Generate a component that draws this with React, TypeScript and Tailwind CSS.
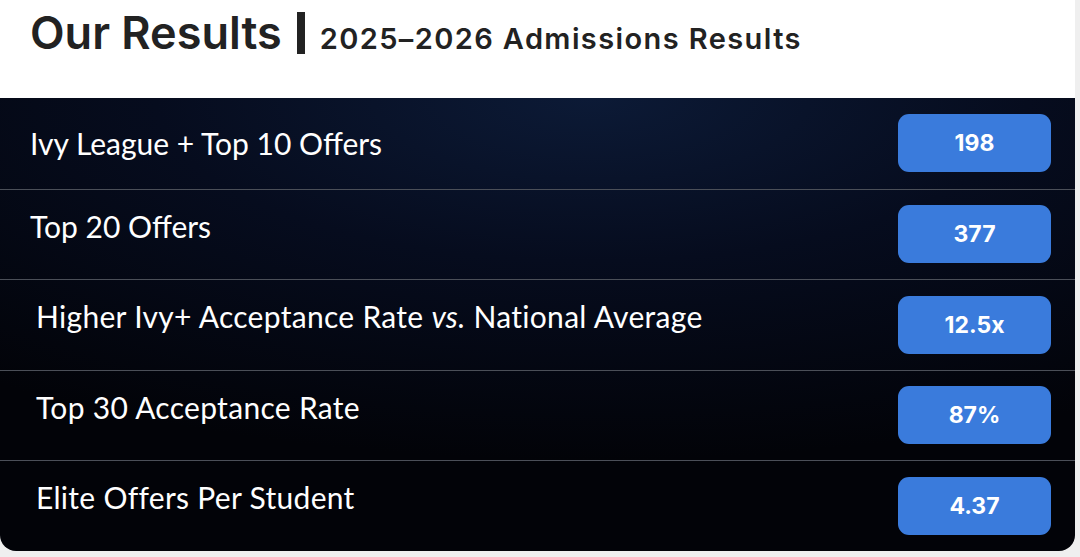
const rows = [
  { label: 'Ivy League + Top 10 Offers', value: '198', indent: false },
  { label: 'Top 20 Offers', value: '377', indent: false },
  { label: 'Higher Ivy+ Acceptance Rate', italic: 'vs.', rest: ' National Average', value: '12.5x', indent: true },
  { label: 'Top 30 Acceptance Rate', value: '87%', indent: true },
  { label: 'Elite Offers Per Student', value: '4.37', indent: true },
]

const heading = { fontFamily: 'Inter, "Noto Sans", sans-serif' }
const body = { fontFamily: 'Lato, "Noto Sans", sans-serif' }

export default function App() {
  return (
    <div className="min-h-[557px] w-[1080px] bg-[#efefef]">
      <div className="w-[1075px]">
        {/* Header */}
        <div className="flex h-[98px] items-baseline bg-white pl-[30px] pt-[5px] text-[#222222]" style={heading}>
          <span className="text-[45px] font-semibold leading-[56px]">Our Results</span>
          <span className="ml-[15px] mt-[7px] h-[42px] w-[8px] self-start bg-[#222222]" />
          <span className="ml-[15px] text-[29px] font-semibold tracking-[1.4px]">2025–2026 Admissions Results</span>
        </div>

        {/* Results panel */}
        <div className="overflow-hidden rounded-b-[16px] bg-[radial-gradient(ellipse_90%_80%_at_55%_0%,#0c1a36_0%,#060c1e_45%,#020308_100%)]">
          {rows.map((row, i) => (
            <div
              key={row.value}
              className={`flex h-[90.5px] items-center justify-between pr-[24px] ${i > 0 ? 'border-t border-[#4b4f58]' : ''}`}
            >
              <div
                className={`text-[30px] leading-none text-white ${row.indent ? 'pl-[36px] tracking-[0.3px]' : 'pl-[30px]'} ${i === 0 ? '' : 'pb-[17px]'}`}
                style={body}
              >
                {row.label}
                {row.italic && (
                  <>
                    {' '}
                    <span className="italic">{row.italic}</span>
                    {row.rest}
                  </>
                )}
              </div>
              <div
                className="flex h-[58px] w-[153px] items-center justify-center rounded-[11px] bg-[#3a7bdc] text-[23px] font-bold text-white"
                style={heading}
              >
                {row.value}
              </div>
            </div>
          ))}
        </div>
      </div>
    </div>
  )
}
